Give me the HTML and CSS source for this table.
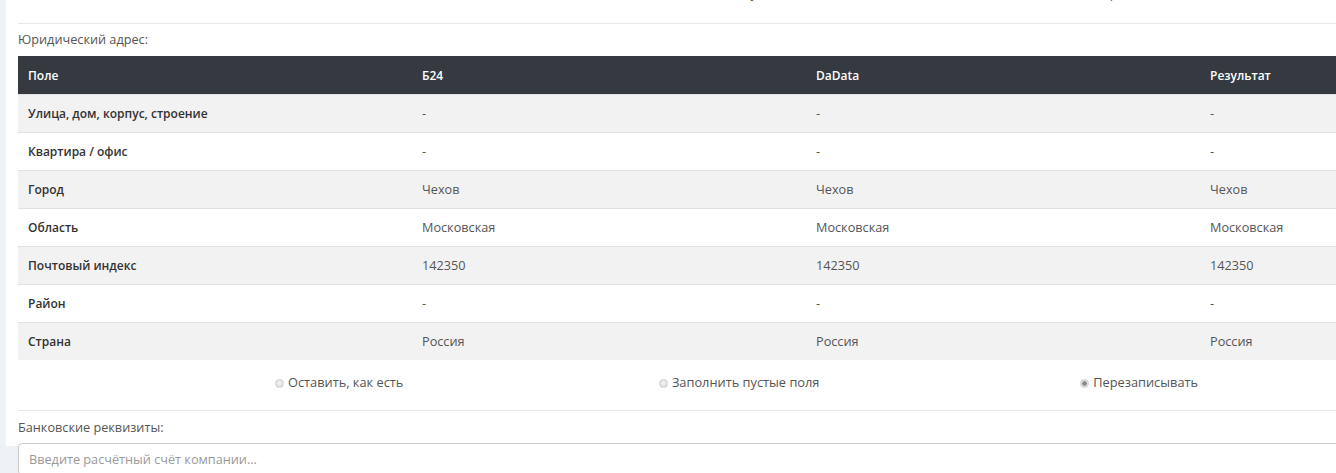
FILE: index.html
```html
<!DOCTYPE html>
<html lang="ru">
<head>
<meta charset="utf-8">
<link rel="stylesheet" href="styles.css">
</head>
<body>
<div class="page">
  <div class="content">
    <div class="radio-row radio-row--top">
      <label class="opt"><input type="radio" name="r0"> Оставить, как есть</label>
      <label class="opt"><input type="radio" name="r0"> Заполнить пустые поля</label>
      <label class="opt"><input type="radio" name="r0" checked> Перезаписывать</label>
    </div>
    <div class="section-label">Юридический адрес:</div>
    <div class="table-wrap">
      <table class="cmp">
        <thead>
          <tr><th>Поле</th><th>Б24</th><th>DaData</th><th>Результат</th></tr>
        </thead>
        <tbody>
          <tr><td class="name">Улица, дом, корпус, строение</td><td>-</td><td>-</td><td>-</td></tr>
          <tr><td class="name">Квартира / офис</td><td>-</td><td>-</td><td>-</td></tr>
          <tr><td class="name">Город</td><td>Чехов</td><td>Чехов</td><td>Чехов</td></tr>
          <tr><td class="name">Область</td><td>Московская</td><td>Московская</td><td>Московская</td></tr>
          <tr><td class="name">Почтовый индекс</td><td>142350</td><td>142350</td><td>142350</td></tr>
          <tr><td class="name">Район</td><td>-</td><td>-</td><td>-</td></tr>
          <tr><td class="name">Страна</td><td>Россия</td><td>Россия</td><td>Россия</td></tr>
        </tbody>
      </table>
    </div>
    <div class="radio-row">
      <label class="opt"><input type="radio" name="r1"> Оставить, как есть</label>
      <label class="opt"><input type="radio" name="r1"> Заполнить пустые поля</label>
      <label class="opt"><input type="radio" name="r1" checked> Перезаписывать</label>
    </div>
    <div class="section-label section-label--bank">Банковские реквизиты:</div>
    <input class="text-input" type="text" placeholder="Введите расчётный счёт компании...">
  </div>
</div>
</body>
</html>
```
FILE: styles.css
```css
html, body {
  margin: 0;
  padding: 0;
  height: 100%;
  overflow: hidden;
}
body {
  background: #eef1f5;
  font-family: "Open Sans", "Liberation Sans", sans-serif;
  font-size: 12.7px;
  color: #555;
}
.page {
  margin-left: 6px;
  background: #fff;
  height: 100%;
}
.content {
  padding-left: 12px;
  width: 1576px;
}
.radio-row {
  display: grid;
  grid-template-columns: 400px 400px 400px;
  padding-left: 121px;
  height: 51px;
  box-sizing: border-box;
  padding-top: 14px;
  align-items: start;
  border-bottom: 1px solid #e8e8e8;
}
.radio-row--top {
  margin-top: -27px;
  padding-top: 12px;
}
.opt {
  text-align: center;
  color: #555;
  line-height: 17px;
  font-size: 12.8px;
}
.opt input {
  -webkit-appearance: none;
  appearance: none;
  width: 9px;
  height: 9px;
  margin: 0 1px 0 0;
  border-radius: 50%;
  border: 1px solid #cfcfcf;
  background: radial-gradient(circle at 50% 40%, #f2f2f2, #d9d9d9);
  vertical-align: -1px;
  box-sizing: border-box;
}
.opt input:checked {
  background: radial-gradient(circle, #8a8a8a 0 2px, #e4e4e4 2.5px, #d6d6d6);
}
.section-label {
  line-height: 17px;
  padding: 7px 0 8px;
  color: #555;
}
.section-label--bank {
  padding: 8px 0 7px;
}
.cmp {
  width: 1576px;
  border-collapse: collapse;
  table-layout: fixed;
}
.cmp th, .cmp td {
  text-align: left;
  padding: 10px;
  line-height: 17px;
  height: 17px;
  vertical-align: middle;
}
.cmp th {
  background: #343a40;
  color: #fff;
  font-size: 12px;
  font-weight: 600;
  padding: 11px 10px 10px;
}
.cmp td {
  border-top: 1px solid #dee2e6;
  color: #555;
}
.cmp tbody tr:nth-child(odd) td {
  background: #f2f2f2;
}
.cmp td.name {
  color: #333;
  font-size: 12px;
  font-weight: 600;
}
.text-input {
  display: block;
  box-sizing: border-box;
  width: 1400px;
  padding: 6px 10px;
  line-height: 18px;
  border: 1px solid #ccc;
  border-radius: 4px;
  font-family: inherit;
  font-size: 12.7px;
  color: #555;
}
.text-input::placeholder {
  color: #999;
}
```
